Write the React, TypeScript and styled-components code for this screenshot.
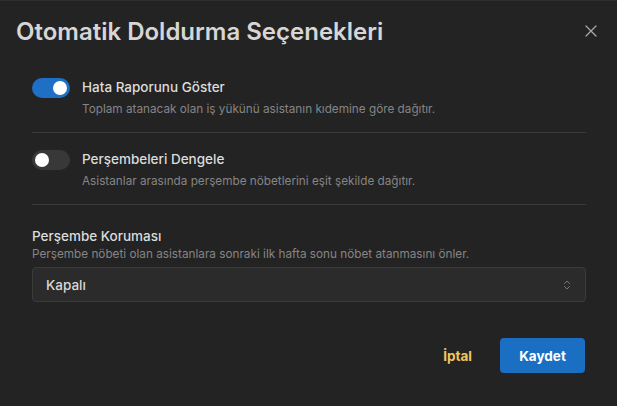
import React, {useState} from 'react';
import styled, {createGlobalStyle, css} from 'styled-components';

const GlobalStyle = createGlobalStyle`
    html, body {
        margin: 0;
        padding: 0;
        background: #232323;
    }
    body {
        font-family: Inter, "Noto Sans", sans-serif;
        -webkit-font-smoothing: antialiased;
    }
`;

/**
 * Switch
 */
const Switch = ({checked, onChange}: {checked: boolean, onChange: (v: boolean) => void}) => {
    return <SwitchTrack
        type="button"
        $checked={checked}
        onClick={() => onChange(!checked)}
    >
        <SwitchKnob $checked={checked}/>
    </SwitchTrack>;
};

const ToggleOption = ({title, desc, checked, onChange}: {
    title: string,
    desc: string,
    checked: boolean,
    onChange: (v: boolean) => void,
}) => {
    return <OptionRow>
        <Switch checked={checked} onChange={onChange}/>
        <OptionText>
            <Label>{title}</Label>
            <Desc>{desc}</Desc>
        </OptionText>
    </OptionRow>;
};

const App = () => {
    const [errorReport, setErrorReport] = useState(true);
    const [balance, setBalance] = useState(false);

    return <>
        <GlobalStyle/>
        <Dialog>
            <Header>
                <Title>Otomatik Doldurma Seçenekleri</Title>
                <CloseButton type="button" aria-label="Kapat">
                    <svg width="12" height="12" viewBox="0 0 12 12" fill="none">
                        <path d="M1 1L11 11M11 1L1 11" stroke="currentColor" strokeWidth="1.3" strokeLinecap="round"/>
                    </svg>
                </CloseButton>
            </Header>

            <Body>
                <ToggleOption
                    title="Hata Raporunu Göster"
                    desc="Toplam atanacak olan iş yükünü asistanın kıdemine göre dağıtır."
                    checked={errorReport}
                    onChange={setErrorReport}
                />
                <Divider/>
                <ToggleOption
                    title="Perşembeleri Dengele"
                    desc="Asistanlar arasında perşembe nöbetlerini eşit şekilde dağıtır."
                    checked={balance}
                    onChange={setBalance}
                />
                <Divider/>

                <Field>
                    <Label>Perşembe Koruması</Label>
                    <Desc>Perşembe nöbeti olan asistanlara sonraki ilk hafta sonu nöbet atanmasını önler.</Desc>
                    <SelectBox>
                        <span>Kapalı</span>
                        <svg width="8" height="12" viewBox="0 0 8 12" fill="none">
                            <path d="M1.5 4.5L4 2L6.5 4.5M1.5 7.5L4 10L6.5 7.5" stroke="currentColor" strokeWidth="1" strokeLinecap="round" strokeLinejoin="round"/>
                        </svg>
                    </SelectBox>
                </Field>
            </Body>

            <Footer>
                <GhostButton type="button">İptal</GhostButton>
                <PrimaryButton type="button">Kaydet</PrimaryButton>
            </Footer>
        </Dialog>
    </>;
};

export default App;



const Dialog = styled.div`
    box-sizing: border-box;
    width: 617px;
    height: 406px;
    background: #232323;
    border-top: 1px solid #2f2f2f;
    display: flex;
    flex-direction: column;
`;

const Header = styled.div`
    display: flex;
    align-items: center;
    justify-content: space-between;
    padding: 16px 20px 0 16px;
    height: 28px;
`;

const Title = styled.h2`
    margin: 0;
    font-size: 24px;
    font-weight: 600;
    color: #d6d6d6;
    letter-spacing: 0;
`;

const CloseButton = styled.button`
    border: 0;
    background: transparent;
    color: #a8a8a8;
    padding: 0;
    width: 12px;
    height: 12px;
    display: flex;
    cursor: pointer;
`;

const Body = styled.div`
    padding: 33px 31px 0 32px;
    display: flex;
    flex-direction: column;
`;

const OptionRow = styled.div`
    display: flex;
    align-items: flex-start;
    gap: 12px;
`;

const OptionText = styled.div`
    display: flex;
    flex-direction: column;
    gap: 5px;
`;

const Label = styled.div`
    font-size: 13.5px;
    font-weight: 500;
    color: #dcdcdc;
    line-height: 18px;
`;

const Desc = styled.div`
    font-size: 11.75px;
    color: #858585;
    line-height: 16px;
`;

const SwitchTrack = styled.button<{$checked: boolean}>`
    position: relative;
    flex: 0 0 auto;
    width: 38px;
    height: 20px;
    border: 0;
    padding: 0;
    border-radius: 10px;
    background: #383838;
    cursor: pointer;

    ${props => props.$checked && css`
        background: #1f6fc5;
    `}
`;

const SwitchKnob = styled.span<{$checked: boolean}>`
    position: absolute;
    top: 3px;
    left: ${props => props.$checked ? '21px' : '3px'};
    width: 14px;
    height: 14px;
    border-radius: 50%;
    background: #fff;
    transition: left .2s;
`;

const Divider = styled.div`
    height: 1px;
    background: #3a3a3a;
    margin: 15px 0 17px;
`;

const Field = styled.div`
    display: flex;
    flex-direction: column;
    padding-top: 5px;
    gap: 1px;
`;

const SelectBox = styled.div`
    box-sizing: border-box;
    margin-top: 4px;
    height: 35px;
    border: 1px solid #3b3b3b;
    border-radius: 4px;
    background: #2b2b2b;
    display: flex;
    align-items: center;
    justify-content: space-between;
    padding: 0 14px 0 13px;
    font-size: 13.5px;
    font-weight: 500;
    color: #d8d8d8;

    svg {
        color: #777;
    }
`;

const Footer = styled.div`
    margin-top: auto;
    display: flex;
    justify-content: flex-end;
    align-items: center;
    gap: 28px;
    padding: 0 32px 33px;
`;

const GhostButton = styled.button`
    border: 0;
    background: transparent;
    color: #efc75e;
    font-family: inherit;
    font-size: 13.5px;
    font-weight: 700;
    padding: 0;
    cursor: pointer;
`;

const PrimaryButton = styled.button`
    border: 0;
    width: 85px;
    height: 35px;
    border-radius: 4px;
    background: #1a6fc3;
    color: #fff;
    font-family: inherit;
    font-size: 13.5px;
    font-weight: 700;
    cursor: pointer;
`;
